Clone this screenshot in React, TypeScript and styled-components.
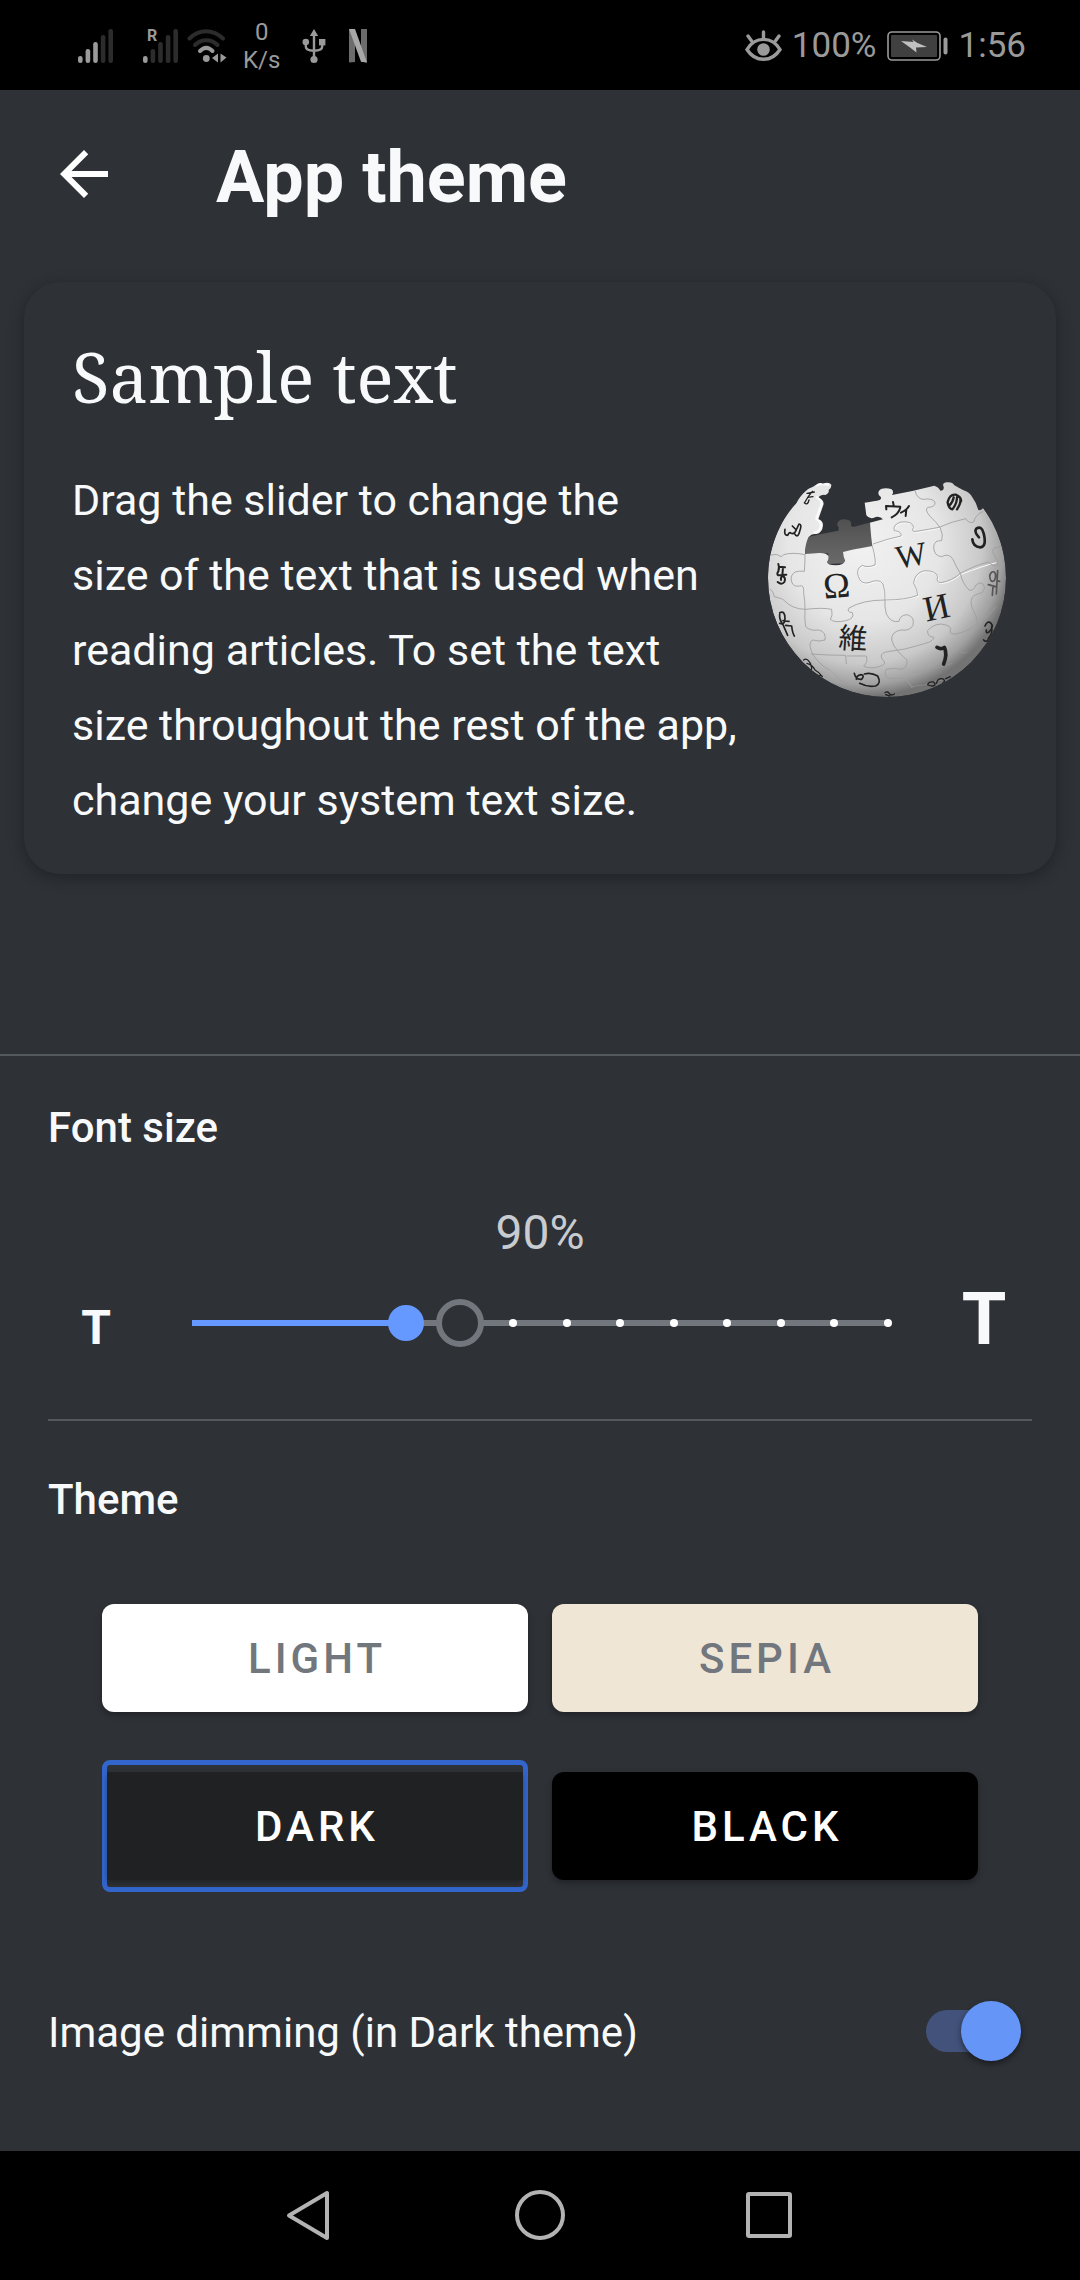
import React, { useState } from "react";
import styled, { createGlobalStyle, css } from "styled-components";

const color = {
  paper: "#2e3136",
  text: "#f8f9fa",
  secondary: "#c8ccd1",
  divider: "#54595d",
  track: "#72777d",
  accent: "#6699ff",
  selected: "#3366cc",
  status: "#9a9a9a",
  statusDim: "#2c2c2c",
  nav: "#b3b3b3",
};

const GlobalStyle = createGlobalStyle`
  *, *::before, *::after { box-sizing: border-box; }
  body {
    margin: 0;
    background: #000;
    color: ${color.text};
    font-family: Roboto, "Noto Sans", sans-serif;
  }
`;

const Screen = styled.div`
  display: flex;
  flex-direction: column;
  min-height: 100vh;
  background: ${color.paper};
`;

const StatusBar = styled.div`
  display: flex;
  align-items: center;
  justify-content: space-between;
  height: 90px;
  padding: 2px 54px 0 76px;
  background: #000;
  color: ${color.status};
`;

const StatusGroup = styled.div<{ $gap: number }>`
  display: flex;
  align-items: center;
  gap: ${(p) => p.$gap}px;
  font-size: 35px;
  line-height: 48px;

  svg {
    display: block;
  }
`;

const NetSpeed = styled.span`
  font-size: 24px;
  line-height: 28px;
  text-align: center;
`;

const Header = styled.header`
  display: flex;
  align-items: center;
  gap: 96px;
  height: 168px;
  padding: 0 48px;
`;

const IconButton = styled.button`
  display: flex;
  padding: 0;
  border: 0;
  background: none;
  color: #fff;
  cursor: pointer;
`;

const Title = styled.h1`
  margin: 8px 0 0;
  font-size: 72px;
  line-height: 84px;
  font-weight: 700;
`;

const Card = styled.article`
  margin: 24px 24px 0;
  padding: 48px 50px 36px 48px;
  border-radius: 36px;
  background: ${color.paper};
  box-shadow: 0 4px 16px rgba(0, 0, 0, 0.3);
`;

const CardTitle = styled.h2`
  margin: 0;
  font-family: "Noto Serif", "Droid Serif", "DejaVu Serif Condensed", "DejaVu Serif", serif;
  font-size: 69px;
  line-height: 92px;
  font-weight: 400;
`;

const CardBody = styled.div`
  display: flex;
  justify-content: space-between;
  margin-top: 41px;
`;

const SampleText = styled.p`
  margin: 0;
  font-size: 43px;
  line-height: 75px;
  white-space: nowrap;
`;

const GlobeFrame = styled.div`
  padding-top: 18px;

  svg {
    display: block;
  }
`;

const Panel = styled.section`
  display: flex;
  flex-direction: column;
  margin-top: auto;
  padding: 48px 48px 88px;
  border-top: 2px solid ${color.divider};
`;

const SectionTitle = styled.h3`
  margin: 0;
  font-size: 42px;
  line-height: 48px;
  font-weight: 500;
`;

const Percent = styled.output`
  margin-top: 53px;
  color: ${color.secondary};
  font-size: 48px;
  line-height: 56px;
  text-align: center;
`;

const SizeRow = styled.div`
  display: flex;
  align-items: baseline;
  min-height: 90px;
  margin-top: 17px;
`;

const SizeButton = styled.button<{ $large?: boolean }>`
  width: 96px;
  padding: 0;
  border: 0;
  background: none;
  color: ${color.text};
  font-family: inherit;
  font-size: ${(p) => (p.$large ? 72 : 48)}px;
  line-height: ${(p) => (p.$large ? 84 : 56)}px;
  font-weight: 700;
  cursor: pointer;
`;

const SliderBox = styled.div`
  position: relative;
  flex: 1;
  align-self: center;
  height: 48px;
  margin: 0 48px;
`;

const Track = styled.div`
  position: absolute;
  top: 21px;
  left: 0;
  width: 100%;
  height: 6px;
  background: ${color.track};
`;

const Fill = styled(Track)`
  background: ${color.accent};
`;

const Tick = styled.span`
  position: absolute;
  top: 20px;
  width: 8px;
  height: 8px;
  margin-left: -4px;
  border-radius: 50%;
  background: #fff;
`;

const DefaultRing = styled.span`
  position: absolute;
  top: 0;
  width: 48px;
  height: 48px;
  margin-left: -24px;
  border: 6px solid ${color.track};
  border-radius: 50%;
  background: ${color.paper};
`;

const thumb = css`
  width: 36px;
  height: 36px;
  border: 0;
  border-radius: 50%;
  background: ${color.accent};
`;

const Range = styled.input`
  position: absolute;
  top: 0;
  left: -18px;
  width: calc(100% + 36px);
  height: 48px;
  margin: 0;
  appearance: none;
  background: none;
  cursor: pointer;

  &::-webkit-slider-thumb {
    appearance: none;
    ${thumb}
  }

  &::-moz-range-thumb {
    ${thumb}
  }
`;

const Divider = styled.hr`
  width: 100%;
  height: 2px;
  margin: 51px 0 55px;
  border: 0;
  background: ${color.divider};
`;

const ThemeGrid = styled.div`
  display: grid;
  grid-template-columns: 1fr 1fr;
  gap: 36px 24px;
  margin: 68px 54px 0;
`;

const ThemeOption = styled.div<{ $selected: boolean }>`
  display: flex;
  height: 132px;
  padding: ${(p) => (p.$selected ? "7px 0" : "12px 0")};
  border-radius: 8px;
  border: ${(p) => (p.$selected ? `5px solid ${color.selected}` : "0")};
`;

const ThemeButton = styled.button<{ $bg: string; $fg: string; $selected: boolean }>`
  flex: 1;
  padding: 0 0 0 4px;
  border: 0;
  border-radius: ${(p) => (p.$selected ? 2 : 12)}px;
  background: ${(p) => p.$bg};
  color: ${(p) => p.$fg};
  box-shadow: 0 3px 6px rgba(0, 0, 0, 0.3);
  font-family: inherit;
  font-size: 42px;
  font-weight: 500;
  letter-spacing: 4px;
  text-transform: uppercase;
  cursor: pointer;
`;

const DimmingRow = styled.div`
  display: flex;
  align-items: center;
  justify-content: space-between;
  margin-top: 107px;
  padding-right: 11px;
`;

const DimmingLabel = styled.label`
  padding-top: 4px;
  font-size: 42px;
  line-height: 60px;
`;

const Switch = styled.input`
  position: relative;
  display: flex;
  align-items: center;
  width: 96px;
  height: 60px;
  margin: 0;
  appearance: none;
  cursor: pointer;

  &::before {
    content: "";
    position: absolute;
    inset: 9px 1px;
    border-radius: 21px;
    background: ${color.divider};
  }

  &::after {
    content: "";
    position: relative;
    width: 60px;
    height: 60px;
    border-radius: 50%;
    background: ${color.secondary};
    box-shadow: 0 3px 6px rgba(0, 0, 0, 0.45);
  }

  &:checked::before {
    background: #42527a;
  }

  &:checked::after {
    margin-left: auto;
    background: #6495f7;
  }
`;

const NavBar = styled.nav`
  display: flex;
  align-items: center;
  justify-content: center;
  gap: 177px;
  height: 129px;
  background: #000;

  button {
    color: ${color.nav};
  }
`;

function SignalBars({ lit, roaming }: { lit: number; roaming?: boolean }) {
  const heights = [7, 14, 21, 28, 34];
  return (
    <svg width="38" height="36" viewBox="0 0 38 36">
      {heights.map((h, i) => (
        <rect
          key={h}
          x={2 + i * 7.6}
          y={35 - h}
          width="4.6"
          height={h}
          rx="2.2"
          fill={i < lit ? color.status : color.statusDim}
        />
      ))}
      {roaming && (
        <text x="6" y="13" fontSize="16" fontWeight="700" fill={color.status}>
          R
        </text>
      )}
    </svg>
  );
}

function WifiIcon() {
  return (
    <svg width="40" height="34" viewBox="0 0 40 34" fill="none" strokeWidth="4" strokeLinecap="round">
      <path d="M2.500 9.500C12-.3 26-.3 36 9.500" stroke={color.statusDim} />
      <path d="M8 16c6.500-6.500 16-6.500 22.500 0" stroke={color.statusDim} />
      <path d="M13 22c4-4 8.500-4 12.500 0" stroke={color.status} />
      <circle cx="19.300" cy="29.500" r="3.400" fill={color.status} />
      <path d="M31 24.500v9l-6-4.500zM33.500 24.500l6 4-6 5z" fill={color.status} />
    </svg>
  );
}

function UsbIcon() {
  return (
    <svg width="24" height="36" viewBox="0 0 24 36" fill="none" stroke={color.status} strokeWidth="2.400">
      <path d="M12 5v27M3.800 14v4.500c0 3 2 4.200 8.200 4.200s8.200-1.200 8.200-4.200V14" />
      <path d="M12 1l4.200 7H7.800z" fill={color.status} stroke="none" />
      <circle cx="3.800" cy="14" r="3.300" fill={color.status} stroke="none" />
      <rect x="17" y="11" width="6.400" height="6.400" fill={color.status} stroke="none" />
      <circle cx="12" cy="31.500" r="3.600" fill={color.status} stroke="none" />
    </svg>
  );
}

function StreamIcon() {
  return (
    <svg width="20" height="34" viewBox="0 0 20 34">
      <path d="M1 0h6v33l-6 .6zM13 0h6v33.600l-6-.8z" fill="#6c6c6c" />
      <path d="M1 0h6l12 33.600-6-.8z" fill="#a8a8a8" />
    </svg>
  );
}

function EyeIcon() {
  return (
    <svg width="37" height="32" viewBox="0 0 37 32" fill="none" stroke={color.status} strokeWidth="3.400" strokeLinecap="round">
      <path d="M2 19.500C10 6 27 6 35 19.500 27 32.500 10 32.500 2 19.500z" />
      <path d="M18.500 2v6M3 6l4 5.500M34 6l-4 5.500" />
      <circle cx="18.500" cy="19.500" r="6.300" fill={color.status} stroke="none" />
    </svg>
  );
}

function BatteryIcon() {
  return (
    <svg width="62" height="30" viewBox="0 0 62 30">
      <rect x="1" y="1" width="52" height="28" rx="4" fill="none" stroke={color.status} strokeWidth="1.600" />
      <rect x="4" y="4" width="46" height="22" rx="1" fill="#404040" />
      <path d="M14 10l12.500 1L25 8.500l5.500 3.500 9.500 4-11 .5.500 5-6.500-5z" fill="#c0c0c0" />
      <rect x="56.500" y="6.500" width="4" height="17" rx="2" fill={color.status} />
    </svg>
  );
}

function PuzzleGlobe() {
  return (
    <svg width="238" height="216" viewBox="87 93 714 648" role="img" aria-label="Puzzle globe">
      <defs>
        <radialGradient id="shade" cx="0.4" cy="0.36" r="0.64">
          <stop offset="0" stopColor="#f1f1f1" />
          <stop offset="0.5" stopColor="#e6e6e6" />
          <stop offset="0.78" stopColor="#c9c9c9" />
          <stop offset="0.92" stopColor="#a0a0a0" />
          <stop offset="1" stopColor="#737373" />
        </radialGradient>
        <linearGradient id="inside" x1="0" y1="0" x2="0" y2="1">
          <stop offset="0" stopColor="#505050" />
          <stop offset="1" stopColor="#6a6a6a" />
        </linearGradient>
        <clipPath id="ball">
          <path d="M172 160Q188 130 205 118Q220 112 232 104Q240 96 252 101Q270 94 277 104Q278 114 269 120Q272 130 260 135Q246 132 238 142Q254 150 254 162L238 208Q252 212 252 226Q250 250 232 252Q218 250 208 262Q198 285 198 312L240 309Q262 308 268 318Q270 328 264 336Q266 346 290 346Q316 344 318 332Q312 316 312 306Q330 300 400 288Q396 260 393 218L432 208Q424 198 410 201Q392 210 382 196Q380 180 377 158Q408 154 422 150Q432 144 420 136Q414 124 426 117Q442 112 458 118Q466 126 459 135Q520 124 586 107Q600 112 604 122Q616 122 614 110Q608 100 622 97Q640 94 646 106Q660 114 672 120Q692 126 700 142Q712 158 718 180Q728 182 732 174C775 230 801 300 801 384A357 357 0 0 1 87 384C87 300 120 215 172 160Z" />
        </clipPath>
      </defs>

      <path d="M198 312L204 262Q250 250 298 242Q302 232 294 224Q296 208 318 208Q340 210 336 226Q338 232 346 230L434 206L404 288L312 306L318 340L264 342L268 310Z" fill="url(#inside)" />

      <g clipPath="url(#ball)">
        <circle cx="444" cy="384" r="357" fill="url(#shade)" />

        <g fill="none" stroke="#fafafa" strokeWidth="3" transform="translate(2 3)">
          <path d="M400 288Q412 332 408 345Q385 354 370 346Q350 356 358 380Q366 404 390 398Q420 384 432 402Q440 425 438 448M400 278Q440 268 486 258Q490 245 466 242Q460 224 486 216Q520 212 524 232Q514 246 532 244Q570 238 600 232" />
          <path d="M438 448Q480 450 536 436Q536 420 524 400Q526 370 556 362Q592 362 596 380Q590 398 606 398Q640 392 664 370Q730 345 770 335" />
        </g>
        <g fill="none" stroke="#9d9d9d" strokeWidth="2.500">
          <path d="M400 288Q412 332 408 345Q385 354 370 346Q350 356 358 380Q366 404 390 398Q420 384 432 402Q440 425 438 448Q436 470 442 492Q456 520 480 514Q482 496 504 494Q528 500 522 526Q512 544 486 540Q456 545 458 570Q464 590 474 600Q490 620 504 630Q506 650 490 658Q460 652 442 658Q434 674 446 684Q470 688 492 684Q508 690 520 714" />
          <path d="M402 282Q440 268 486 258Q490 245 466 242Q460 224 486 216Q520 212 524 232Q514 246 532 244Q570 238 600 232Q640 214 680 206Q690 222 704 216Q708 196 732 184" />
          <path d="M528 122Q534 146 552 148Q580 144 588 156Q590 172 566 172Q556 180 574 200Q592 216 604 234Q614 256 608 272Q586 270 584 290Q584 318 608 320Q630 308 642 328Q650 348 664 370Q670 400 690 420Q704 424 710 406Q730 390 736 410Q738 428 716 432Q690 438 698 470Q716 500 716 530" />
          <path d="M198 312Q198 340 196 364Q180 362 168 366Q152 376 158 396Q164 412 182 408Q196 402 194 430Q198 450 198 478Q196 510 200 530Q214 544 240 540Q262 546 258 570Q240 576 222 570Q206 576 218 606Q232 636 270 660" />
          <path d="M94 316Q118 310 120 318Q130 322 134 314Q160 306 198 314M92 416Q104 424 106 440Q130 446 134 450Q160 478 200 478Q250 472 278 478Q282 498 274 508Q286 520 320 512Q348 506 340 488Q322 486 330 474Q370 450 438 450Q500 450 536 436Q536 420 524 400Q526 370 556 362Q592 362 596 380Q590 398 606 398Q640 392 664 370Q710 345 748 336Q764 352 776 346Q780 332 768 320Q756 302 766 294Q780 288 796 292" />
          <path d="M216 612Q270 616 320 616L322 642M324 618L382 618Q388 636 374 648Q390 658 420 650Q448 642 430 628Q420 612 440 606Q500 600 560 580Q586 572 584 562Q564 560 566 542Q580 524 606 522Q640 526 634 542Q630 554 650 552Q690 544 716 520Q750 500 772 470" />
          <path d="M520 710Q560 708 600 690Q620 700 640 684M660 600Q666 614 684 606M270 658Q300 680 300 690Q330 700 350 724M520 668Q580 662 640 640" strokeOpacity="0.6" />
        </g>

        <g fill="none" stroke="#ffffff" strokeWidth="7" strokeLinecap="round" opacity="0.8">
          <path d="M234 142Q248 150 248 162L232 206Q246 216 246 228Q242 246 226 248" />
          <path d="M232 106Q246 100 268 104" />
        </g>

        <g fill="#222" fontFamily='"Liberation Serif", "Noto Sans CJK JP", serif' textAnchor="middle">
          <text x="296" y="443" fontSize="108" transform="rotate(-5 296 443)">Ω</text>
          <text x="522" y="348" fontSize="98" transform="rotate(-10 522 348)">W</text>
          <text x="600" y="507" fontSize="108" transform="rotate(-12 600 507)">И</text>
          <text x="340" y="596" fontSize="86" transform="rotate(4 340 596)">維</text>
        </g>

        <g fill="none" stroke="#222" strokeLinecap="round" strokeLinejoin="round">
          <path d="M462 156L464 166M442 178L441 168L484 170Q482 190 458 202M510 168Q502 182 486 188M502 178L500 198" strokeWidth="6" />
          <path d="M752 378Q756 362 766 366Q774 376 766 392Q754 400 752 378M748 404L770 410M762 408L760 436M776 362L772 432M774 392L782 394" strokeWidth="5" stroke="#555" />
          <path d="M594 592Q606 600 616 592Q626 612 614 642" strokeWidth="11" />
          <path d="M720 262Q704 246 712 236Q728 226 734 250Q744 290 724 292Q702 290 700 268" strokeWidth="8" />
          <path d="M626 156Q632 132 650 134Q668 142 666 154M630 168Q642 156 644 142M642 176Q654 160 654 142M654 178Q666 160 664 148M626 158Q630 176 640 178" strokeWidth="7" />
          <path d="M138 238Q134 256 146 256Q152 244 156 250Q166 254 172 240L160 228M166 250Q176 268 182 244Q190 222 180 222Q174 236 166 250" strokeWidth="5" />
          <path d="M198 156Q206 140 220 124M204 130L226 126M196 158Q206 168 210 150M206 142L222 140" strokeWidth="4" />
          <path d="M118 342Q122 352 118 364Q112 372 118 376L142 374M120 350L138 352M132 352L130 376Q142 384 136 396Q128 406 116 396M130 376Q124 384 126 390" strokeWidth="6" />
          <path d="M122 492Q120 508 132 524L146 556M122 488Q138 480 138 506Q138 526 122 520M140 526L158 528Q160 548 166 558M132 512L150 514" strokeWidth="5" />
          <path d="M194 630Q204 622 214 640Q222 660 214 662M204 640Q222 646 228 660Q240 666 250 680M216 664Q232 680 246 676" strokeWidth="4" />
          <path d="M346 670Q350 690 368 688Q378 676 366 674Q352 676 352 688M376 672Q396 666 416 678Q428 700 410 708Q384 712 362 700" strokeWidth="5" />
          <path d="M738 528Q746 510 756 520Q766 530 750 546Q740 552 742 540M758 530Q762 550 748 566M734 570Q742 580 750 564" strokeWidth="5" />
          <path d="M566 704Q570 694 584 696Q594 706 580 708Q566 706 566 704M592 700Q596 684 610 686Q622 692 612 698M620 686L634 680" strokeWidth="4" />
          <path d="M438 728Q446 722 452 732Q458 738 466 732M440 734L452 738" strokeWidth="4" />
        </g>
      </g>
    </svg>
  );
}

const STEPS = 13;
const DEFAULT_STEP = 5;

const themes = [
  { id: "light", label: "Light", bg: "#ffffff", fg: "#72777d" },
  { id: "sepia", label: "Sepia", bg: "#f0e6d6", fg: "#72777d" },
  { id: "dark", label: "Dark", bg: "#202122", fg: "#ffffff" },
  { id: "black", label: "Black", bg: "#000000", fg: "#ffffff" },
];

export default function App() {
  const [step, setStep] = useState(4);
  const [theme, setTheme] = useState("dark");
  const [dimming, setDimming] = useState(true);

  const at = (n: number) => `${(n / STEPS) * 100}%`;
  const move = (by: number) => setStep((s) => Math.min(STEPS, Math.max(0, s + by)));

  return (
    <Screen>
      <GlobalStyle />
      <StatusBar>
        <StatusGroup $gap={22}>
          <StatusGroup $gap={16}>
            <StatusGroup $gap={27}>
              <SignalBars lit={3} />
              <StatusGroup $gap={8}>
                <SignalBars lit={1} roaming />
                <WifiIcon />
              </StatusGroup>
            </StatusGroup>
            <NetSpeed>
              0<br />
              K/s
            </NetSpeed>
          </StatusGroup>
          <UsbIcon />
          <StreamIcon />
        </StatusGroup>
        <StatusGroup $gap={10}>
          <EyeIcon />
          <span>100%</span>
          <BatteryIcon />
          <span>1:56</span>
        </StatusGroup>
      </StatusBar>

      <Header>
        <IconButton type="button" aria-label="Back">
          <svg width="72" height="72" viewBox="0 0 24 24" fill="currentColor">
            <path d="M20 11H7.830l5.590-5.590L12 4l-8 8 8 8 1.410-1.410L7.830 13H20v-2z" />
          </svg>
        </IconButton>
        <Title>App theme</Title>
      </Header>

      <Card>
        <CardTitle>Sample text</CardTitle>
        <CardBody>
          <SampleText>
            Drag the slider to change the
            <br />
            size of the text that is used when
            <br />
            reading articles. To set the text
            <br />
            size throughout the rest of the app,
            <br />
            change your system text size.
          </SampleText>
          <GlobeFrame>
            <PuzzleGlobe />
          </GlobeFrame>
        </CardBody>
      </Card>

      <Panel>
        <SectionTitle id="font-size">Font size</SectionTitle>
        <Percent htmlFor="size-range">{100 + (step - DEFAULT_STEP) * 10}%</Percent>
        <SizeRow>
          <SizeButton type="button" aria-label="T, decrease text size" onClick={() => move(-1)}>
            T
          </SizeButton>
          <SliderBox>
            <Track />
            <Fill style={{ width: at(step) }} />
            {Array.from({ length: STEPS + 1 }, (_, n) => n)
              .filter((n) => n > step && n !== DEFAULT_STEP)
              .map((n) => (
                <Tick key={n} style={{ left: at(n) }} />
              ))}
            <DefaultRing style={{ left: at(DEFAULT_STEP) }} />
            <Range
              id="size-range"
              type="range"
              min={0}
              max={STEPS}
              value={step}
              aria-labelledby="font-size"
              onChange={(e) => setStep(Number(e.target.value))}
            />
          </SliderBox>
          <SizeButton type="button" $large aria-label="T, increase text size" onClick={() => move(1)}>
            T
          </SizeButton>
        </SizeRow>

        <Divider />

        <SectionTitle>Theme</SectionTitle>
        <ThemeGrid>
          {themes.map((t) => (
            <ThemeOption key={t.id} $selected={t.id === theme}>
              <ThemeButton
                type="button"
                $bg={t.bg}
                $fg={t.fg}
                $selected={t.id === theme}
                aria-pressed={t.id === theme}
                onClick={() => setTheme(t.id)}
              >
                {t.label}
              </ThemeButton>
            </ThemeOption>
          ))}
        </ThemeGrid>

        <DimmingRow>
          <DimmingLabel htmlFor="dimming">Image dimming (in Dark theme)</DimmingLabel>
          <Switch
            id="dimming"
            type="checkbox"
            role="switch"
            checked={dimming}
            onChange={(e) => setDimming(e.target.checked)}
          />
        </DimmingRow>
      </Panel>

      <NavBar>
        <IconButton type="button" aria-label="Back">
          <svg width="52" height="52" viewBox="0 0 52 52" fill="none" stroke="currentColor" strokeWidth="4" strokeLinejoin="round">
            <path d="M42 3v45L4 25.500z" />
          </svg>
        </IconButton>
        <IconButton type="button" aria-label="Home">
          <svg width="52" height="52" viewBox="0 0 52 52" fill="none" stroke="currentColor" strokeWidth="4">
            <circle cx="26" cy="25" r="23" />
          </svg>
        </IconButton>
        <IconButton type="button" aria-label="Recent apps">
          <svg width="52" height="52" viewBox="0 0 52 52" fill="none" stroke="currentColor" strokeWidth="4" strokeLinejoin="round">
            <rect x="5" y="4" width="42" height="42" rx="1" />
          </svg>
        </IconButton>
      </NavBar>
    </Screen>
  );
}
